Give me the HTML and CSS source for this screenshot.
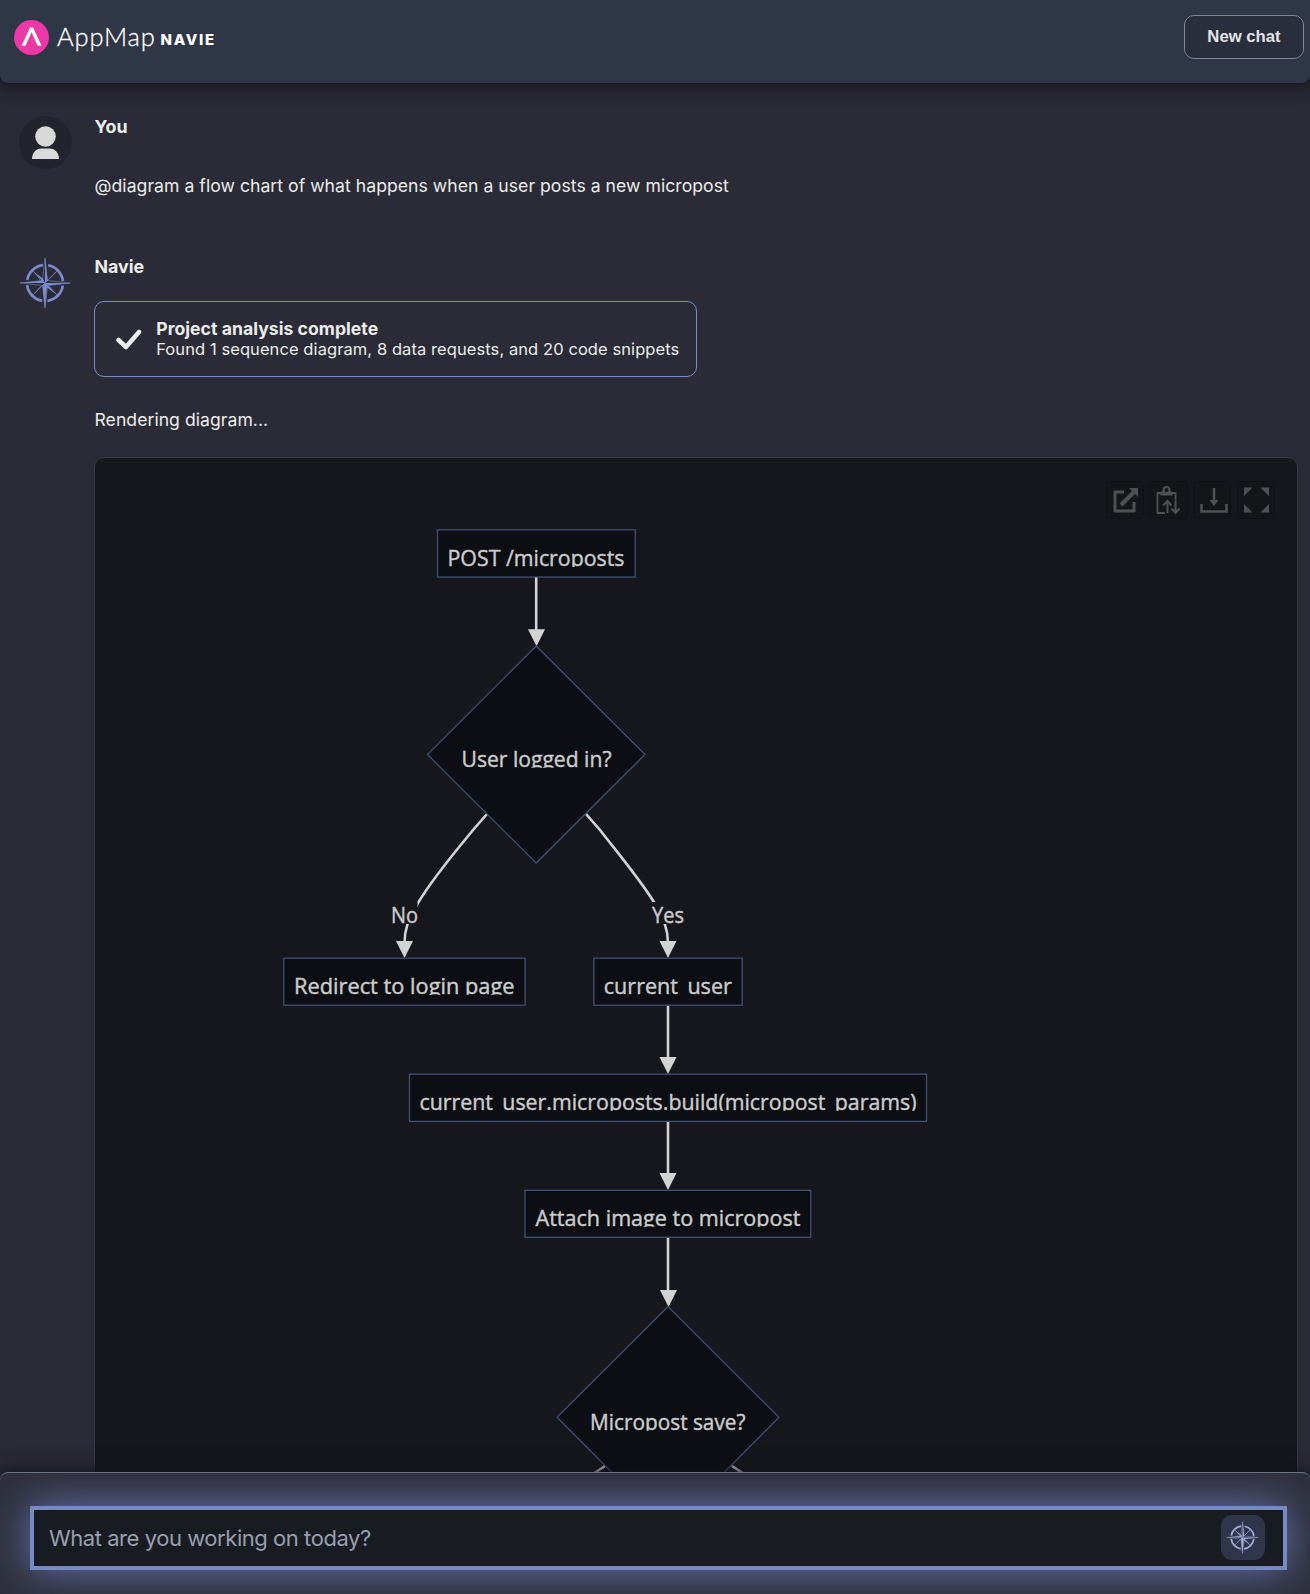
FILE: index.html
```html
<!DOCTYPE html>
<html lang="en">
<head>
<meta charset="utf-8">
<title>AppMap Navie</title>
<link rel="stylesheet" href="styles.css">
</head>
<body>
<svg class="defs" aria-hidden="true">
  <defs>
    <symbol id="compass" viewBox="0 0 52 52">
      <circle cx="26" cy="26" r="18" fill="none" stroke="currentColor" stroke-width="2.7" stroke-dasharray="22.8 5.474" stroke-dashoffset="-2.737"/>
      <path fill="currentColor" d="M26 26 14.500 14.500 24 21.500ZM26 26 37.500 14.500 28.500 23.500ZM26 26 37.500 37.500 28 30.500ZM26 26 14.500 37.500 23.500 28.500Z"/>
      <path fill="none" stroke="currentColor" stroke-width=".7" d="M26 26 14.500 14.500 22 23.500M26 26 37.500 14.500 30 22M26 26 37.500 37.500 30 29M26 26 14.500 37.500 22 29"/>
      <path fill="none" stroke="currentColor" stroke-width=".6" d="M26 1 23.500 23.500 1 26 23.500 28.500 26 51 28.500 28.500 51 26 28.500 23.500Z"/>
      <path fill="currentColor" d="M26 0 28.500 23.500 26 26ZM26 52 23.500 28.500 26 26ZM0 26 23.500 23.500 26 26ZM52 26 28.500 28.500 26 26ZM26 26V51L28 29ZM26 26H2L23 24Z"/>
    </symbol>
  </defs>
</svg>
<header class="header">
  <div class="brand">
    <svg class="brand-mark" viewBox="0 0 35 35"><circle cx="17.500" cy="17.500" r="17.500" fill="#ec37a7"/><path fill="#fff" d="M7.500 25.800 16 7.500h3l8.500 18.300h-3.900L17.500 12.200l-6 13.600Z"/></svg>
    <span class="brand-name">AppMap</span><span class="brand-sub">NAVIE</span>
  </div>
  <button class="new-chat">New chat</button>
</header>
<main class="chat">
  <section class="message user-message">
    <div class="avatar avatar-user"><svg viewBox="0 0 53 53"><circle cx="26.500" cy="20.500" r="10.300"/><path d="M13 43c0-6 4-10.500 9-10.500h9c5 0 9 4.500 9 10.500Z"/></svg></div>
    <div class="body">
      <h2 class="author">You</h2>
      <p class="text question">@diagram a flow chart of what happens when a user posts a new micropost</p>
    </div>
  </section>
  <section class="message">
    <div class="avatar avatar-navie"><svg><use href="#compass"/></svg></div>
    <div class="body">
      <h2 class="author">Navie</h2>
      <div class="status">
        <svg class="check" viewBox="0 0 26 22"><path d="M2.500 11 10 18 23 3"/></svg>
        <div>
          <div class="status-title">Project analysis complete</div>
          <div class="status-detail">Found 1 sequence diagram, 8 data requests, and 20 code snippets</div>
        </div>
      </div>
      <p class="text rendering">Rendering diagram...</p>
      <div class="diagram">
        <div class="tools">
          <button class="tool"><svg viewBox="0 0 36 36"><path fill="none" stroke="currentColor" stroke-width="3" stroke-linejoin="round" d="M17 10H8v19h19v-9"/><path fill="none" stroke="currentColor" stroke-width="4" d="m14 23 13-13"/><path fill="currentColor" d="M22 6h9v9Z"/></svg></button>
          <button class="tool"><svg viewBox="0 0 36 36"><path fill="none" stroke="currentColor" stroke-width="1.800" d="M14 31H6.500V11H11M20 11h4.500v7"/><path fill="none" stroke="currentColor" stroke-width="2" d="M16.500 31V19m-4.500 4.500 4.500-4.500 4 4.500M24.500 18.500V31m-4-4.500 4 4.500 4-4.500"/><circle cx="15.500" cy="8" r="2.900" fill="none" stroke="currentColor" stroke-width="2"/><path fill="currentColor" d="M9.500 13.500V10l3-1.500q3 4 6 0l3 1.500v3.500Z"/></svg></button>
          <button class="tool"><svg viewBox="0 0 36 36"><path fill="none" stroke="currentColor" stroke-width="2.600" d="M7.500 22v7.500h25V22M20 6v14"/><path fill="currentColor" d="M15.500 18h9L20 24Z"/></svg></button>
          <button class="tool"><svg viewBox="0 0 36 36"><path fill="currentColor" d="M6 5.500h8.500L6 14ZM22.500 5.500H31V14ZM6 22v8.500h8.500ZM31 22v8.500h-8.500Z"/></svg></button>
        </div>
        <svg class="flow" viewBox="95 458 1202 1100" width="1202" height="1100">
          <defs>
            <clipPath id="row1"><rect x="430" y="540" width="220" height="27"/></clipPath>
            <clipPath id="row2"><rect x="430" y="740" width="220" height="27.700"/></clipPath>
            <clipPath id="row3"><rect x="280" y="965" width="480" height="29.800"/></clipPath>
            <clipPath id="row4"><rect x="400" y="1080" width="540" height="30.800"/></clipPath>
            <clipPath id="row5"><rect x="520" y="1195" width="300" height="31.800"/></clipPath>
            <clipPath id="row6"><rect x="560" y="1400" width="220" height="30.800"/></clipPath>
          </defs>
          <g class="edges">
            <path d="M536.200 577V632"/>
            <path d="M487 814 473 830C459 847 432 879 418 903 408 919 404.500 930 404.500 943"/>
            <path d="M586 814 600 830C613 847 640 879 654.500 903 664 919 668 930 668 943"/>
            <path d="M668 1005.500V1060M668 1121.500V1176M668 1237V1293"/>
            <path d="M605 1466 590 1476M732 1466 747 1476"/>
          </g>
          <g class="heads">
            <path d="M528 629.300h17l-8.500 17ZM396 941h17l-8.500 17ZM659.500 941h17l-8.500 17ZM659.500 1057h17l-8.500 17ZM659.500 1173h17l-8.500 17ZM660 1290h17l-8.500 17Z"/>
          </g>
          <g class="nodes">
            <rect x="437.500" y="529.800" width="197.700" height="47.200"/>
            <path d="M536.200 646 645 754.500 536.200 863 427.500 754.500Z"/>
            <rect x="283.800" y="958.200" width="241.300" height="47"/>
            <rect x="593.900" y="958.200" width="148.300" height="47"/>
            <rect x="409.500" y="1074.200" width="517" height="47.200"/>
            <rect x="525" y="1190.300" width="285.800" height="47"/>
            <path d="M668 1306.500 779 1417.300 668 1528.500 557 1417.300Z"/>
          </g>
          <g class="label-bg"><rect x="391" y="902" width="26.500" height="22"/><rect x="652" y="902" width="32" height="22"/></g>
          <g class="labels">
            <text x="447.500" y="565.700" textLength="177" lengthAdjust="spacingAndGlyphs" clip-path="url(#row1)">POST /microposts</text>
            <text x="461.500" y="766.700" textLength="150" lengthAdjust="spacingAndGlyphs" clip-path="url(#row2)">User logged in?</text>
            <text x="391" y="922.800" textLength="27" lengthAdjust="spacingAndGlyphs">No</text>
            <text x="652" y="922.800" textLength="32" lengthAdjust="spacingAndGlyphs">Yes</text>
            <text x="294" y="993.800" textLength="220.500" lengthAdjust="spacingAndGlyphs" clip-path="url(#row3)">Redirect to login page</text>
            <text x="603.800" y="993.800" textLength="128" lengthAdjust="spacingAndGlyphs" clip-path="url(#row3)">current_user</text>
            <text x="419.500" y="1109.800" textLength="497" lengthAdjust="spacingAndGlyphs" clip-path="url(#row4)">current_user.microposts.build(micropost_params)</text>
            <text x="535.500" y="1225.700" textLength="265" lengthAdjust="spacingAndGlyphs" clip-path="url(#row5)">Attach image to micropost</text>
            <text x="590" y="1429.800" textLength="155.500" lengthAdjust="spacingAndGlyphs" clip-path="url(#row6)">Micropost save?</text>
          </g>
        </svg>
      </div>
    </div>
  </section>
</main>
<footer class="composer">
  <div class="input">
    <span class="placeholder">What are you working on today?</span>
    <button class="send"><svg><use href="#compass"/></svg></button>
  </div>
</footer>
</body>
</html>
```
FILE: styles.css
```css
* { box-sizing: border-box; }
body {
  margin: 0;
  height: 1594px;
  display: flex;
  flex-direction: column;
  overflow: hidden;
  background: #2a2b36;
  color: #ececec;
  font-family: Inter, "Liberation Sans", sans-serif;
}
button { margin: 0; padding: 0; border: 0; background: none; color: inherit; }
h2, p { margin: 0; }
.defs { display: block; width: 0; height: 0; flex: none; position: absolute; }

.header {
  flex: none;
  height: 83px;
  display: flex;
  align-items: flex-start;
  justify-content: space-between;
  padding: 15px 6px 0 14px;
  background: #2f3645;
  border-radius: 0 0 8px 8px;
  box-shadow: 0 0 16px 4px #12141c;
  z-index: 1;
}
.brand { display: flex; align-items: flex-start; height: 45px; font-family: Lato, sans-serif; color: #fff; }
.brand-mark { width: 35px; height: 35px; margin: 5px 8px 0 0; }
.brand-name { font-size: 25.500px; font-weight: 300; line-height: 42px; letter-spacing: .850px; -webkit-text-stroke: .3px #fff; }
.brand-sub { margin-left: 5px; font-family: Inter, sans-serif; font-size: 15px; font-weight: 800; line-height: 49px; letter-spacing: 1.700px; }
.new-chat {
  width: 120px;
  height: 44px;
  border: 1px solid #7d8494;
  border-radius: 10px;
  background: #292e3d;
  color: #e4e4e8;
  font: bold 16.700px/42px "Liberation Sans", sans-serif;
}

.chat { flex: 1; min-height: 0; overflow: hidden; padding: 32px 12px 0 19px; }
.message { display: flex; gap: 22px; }
.user-message { height: 140px; }
.body { flex: 1; min-width: 0; }
.avatar { width: 53px; height: 53px; flex: none; border-radius: 50%; }
.avatar svg { display: block; width: 100%; height: 100%; }
.avatar-user { margin-top: 1px; background: #23232d; fill: #d9d9d9; }
.avatar-navie { color: #7a8bc9; }
.avatar-navie svg { width: 52px; height: 52px; margin: 1.500px 0 0; }
.author { font-size: 17.800px; line-height: 24px; font-weight: 700; padding-left: .500px; }
.text { font-size: 17.600px; line-height: 24px; letter-spacing: .040px; padding-left: .500px; }
.question { margin-top: 35px; }
.status {
  width: 603px;
  height: 76px;
  margin-top: 22px;
  padding: 0 0 0 20.500px;
  display: flex;
  align-items: center;
  gap: 14.700px;
  border: 1px solid #7a8bc9;
  border-radius: 10px;
}
.check { width: 26px; height: 22px; margin-top: 1px; flex: none; fill: none; stroke: #ececec; stroke-width: 4.500; stroke-linecap: round; stroke-linejoin: round; }
.status-title { font-size: 17.600px; line-height: 20px; font-weight: 700; letter-spacing: .040px; white-space: nowrap; }
.status-detail { font-size: 16.500px; line-height: 20px; letter-spacing: .080px; white-space: nowrap; }
.rendering { margin-top: 31px; }

.diagram {
  position: relative;
  width: 1204px;
  margin-top: 25px;
  border: 1px solid #393942;
  border-radius: 10px;
  background: #16171c;
}
.flow { display: block; }
.tools { position: absolute; top: 23px; right: 22px; display: flex; gap: 5.600px; color: #4f5054; }
.tool { width: 38px; height: 38px; border: 1px solid #101115; border-radius: 4px; background: #141519; }
.tool svg { display: block; width: 36px; height: 36px; }
.edges { fill: none; stroke: #d3d3d3; stroke-width: 2.600; }
.heads { fill: #d3d3d3; }
.nodes { fill: #0d0e13; stroke: #444d72; stroke-width: 1.300; }
.label-bg { fill: #16171c; }
.labels { fill: #ccc; stroke: #ccc; stroke-width: .400; font-family: "Open Sans", "Noto Sans", sans-serif; font-size: 21.600px; }

.composer {
  flex: none;
  height: 122px;
  padding: 33px 23px 0 30px;
  overflow: hidden;
  border-top: 1px solid #6b7582;
  border-radius: 8px 8px 0 0;
  background: #2e2f3b;
  box-shadow: 0 0 20px 2px #101219;
  z-index: 1;
}
.input {
  height: 64px;
  display: flex;
  align-items: center;
  justify-content: space-between;
  padding: 0 18px 0 15px;
  border: 4px solid #788ac3;
  background: #191b23;
  box-shadow: 0 0 44px #6677b3;
}
.placeholder { color: #9a9fab; font-size: 22px; line-height: 28px; letter-spacing: -.450px; }
.send { width: 44px; height: 45px; margin-bottom: 1px; padding: 6px 5px; border-radius: 11px; background: #2f354a; color: #a3b0dc; }
.send svg { display: block; width: 33px; height: 33px; }
```
